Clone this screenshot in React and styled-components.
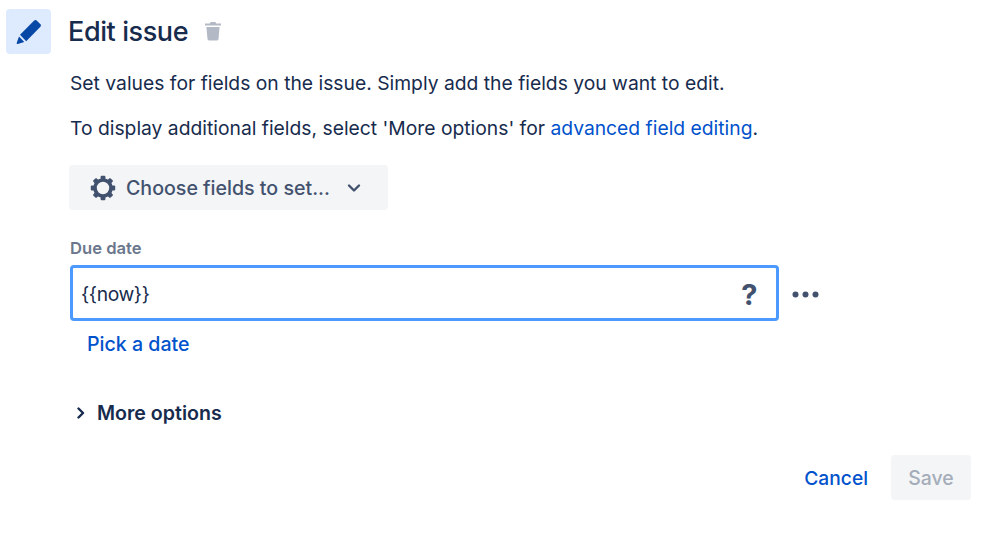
import React from "react";
import styled, { createGlobalStyle } from "styled-components";

const Global = createGlobalStyle`
  html, body { margin: 0; padding: 0; background: #fff; }
  body { font-family: Inter, "Liberation Sans", sans-serif; color: #172b4d; }
`;
const Page = styled.div`
  width: 998px; height: 558px; box-sizing: border-box; padding: 9px 27px 0 6px; overflow: hidden;
  display: flex; flex-direction: column;
`;
const Header = styled.header`
  display: flex; align-items: center; height: 45px;
`;
const IconTile = styled.div`
  width: 45px; height: 45px; border-radius: 4px; background: #deebff;
  display: flex; align-items: center; justify-content: center; margin-right: 17px;
`;
const Title = styled.h1`
  margin: 0; font-size: 27px; font-weight: 500; letter-spacing: -0.4px; color: #172b4d; line-height: 45px;
`;
const Trash = styled.svg`
  width: 18px; height: 20px; margin-left: 16px; margin-top: -2px;
`;
const Body = styled.div`
  padding-left: 64px; display: flex; flex-direction: column;
`;
const Para = styled.p`
  margin: ${p => p.$top}px 0 0; font-size: 19.3px; line-height: 24px; color: #172b4d;
`;
const Link = styled.a`
  color: #0052cc; text-decoration: none;
`;
const FieldButton = styled.button`
  margin: 25px 0 0 -1px; width: 319px; height: 45px; border: 0; border-radius: 4px; background: #f4f5f7;
  display: flex; align-items: center; padding: 0 0 0 21px; box-sizing: border-box;
  font: 500 19.6px Inter, sans-serif; color: #42526e;
`;
const ButtonLabel = styled.span`
  margin-left: 10px;
`;
const Chevron = styled.svg`
  margin-left: 17px; width: 14px; height: 10px;
`;
const Label = styled.label`
  margin-top: 28px; font-size: 16.6px; font-weight: 600; line-height: 20px; color: #6b778c;
`;
const FieldRow = styled.div`
  margin-top: 7px; display: flex; align-items: center;
`;
const Input = styled.div`
  width: 709px; height: 56px; box-sizing: border-box; border: 3px solid #4c9aff; border-radius: 4px;
  display: flex; align-items: center; justify-content: space-between; padding: 2px 19px 0 8px;
  font-size: 19.3px; letter-spacing: -0.4px; color: #172b4d; background: #fff;
`;
const Help = styled.span`
  font-size: 29px; font-weight: 700; color: #42526e; line-height: 1;
`;
const Dots = styled.svg`
  width: 27px; height: 7px; margin: 3px 0 0 13px;
`;
const PickDate = styled(Link)`
  margin: 11px 0 0 17px; font-size: 19.6px; font-weight: 500; line-height: 24px;
`;
const More = styled.div`
  margin-top: 45px; display: flex; align-items: center; font-size: 19.6px; font-weight: 600; line-height: 24px; color: #172b4d;
`;
const MoreIcon = styled.svg`
  width: 10px; height: 12px; margin: 0 11px 0 6px;
`;
const Actions = styled.div`
  margin-top: 30px; display: flex; justify-content: flex-end; align-items: center;
`;
const Cancel = styled(Link)`
  font-size: 19.2px; font-weight: 500; margin-right: 23px;
`;
const Save = styled.button`
  width: 80px; height: 45px; border: 0; border-radius: 4px; background: #f4f5f7; color: #a5adba;
  font: 500 19.4px Inter, sans-serif; padding: 0;
`;

const Gear = () => (
  <svg width="26" height="26" viewBox="0 0 26 26">
    <circle cx="13" cy="13" r="8" fill="none" stroke="#42526e" strokeWidth="3.6" />
    {[0, 45, 90, 135, 180, 225, 270, 315].map(a => (
      <rect key={a} x="10.6" y="0.8" width="4.8" height="4" rx="1" fill="#42526e" transform={`rotate(${a} 13 13)`} />
    ))}
  </svg>
);

export default function App() {
  return (
    <Page>
      <Global />
      <Header>
        <IconTile>
          <svg width="26" height="26" viewBox="0 0 26 26">
            <path fill="#0747a6" d="M18.2 1.6a1.8 1.8 0 0 1 2.5 0l3.7 3.6a1.8 1.8 0 0 1 0 2.5L10.2 22.2 4 15.8z" />
            <path fill="#0747a6" d="M3 17.6l5.3 5.4-6.6 2a.8.8 0 0 1-1-1z" />
          </svg>
        </IconTile>
        <Title>Edit issue</Title>
        <Trash viewBox="0 0 18 20">
          <path fill="#b3bac5" d="M6.5 1h5l.6 1.4H17v2.2H1V2.4h4.9zM2.4 6h13.2l-1.1 12a1.5 1.5 0 0 1-1.5 1.4H5a1.5 1.5 0 0 1-1.5-1.4z" />
        </Trash>
      </Header>
      <Body>
        <Para $top={17}>Set values for fields on the issue. Simply add the fields you want to edit.</Para>
        <Para $top={21}>To display additional fields, select 'More options' for <Link>advanced field editing</Link>.</Para>
        <FieldButton>
          <Gear />
          <ButtonLabel>Choose fields to set...</ButtonLabel>
          <Chevron viewBox="0 0 14 10">
            <path d="M2 2.5l5 5 5-5" fill="none" stroke="#42526e" strokeWidth="2.4" strokeLinecap="round" strokeLinejoin="round" />
          </Chevron>
        </FieldButton>
        <Label>Due date</Label>
        <FieldRow>
          <Input>
            <span>{"{{now}}"}</span>
            <Help>?</Help>
          </Input>
          <Dots viewBox="0 0 27 7">
            <circle cx="3.5" cy="3.5" r="3" fill="#42526e" />
            <circle cx="13.5" cy="3.5" r="3" fill="#42526e" />
            <circle cx="23.5" cy="3.5" r="3" fill="#42526e" />
          </Dots>
        </FieldRow>
        <PickDate>Pick a date</PickDate>
        <More>
          <MoreIcon viewBox="0 0 10 12">
            <path d="M2.5 1.5L7 6l-4.5 4.5" fill="none" stroke="#172b4d" strokeWidth="2.4" strokeLinecap="round" strokeLinejoin="round" />
          </MoreIcon>
          More options
        </More>
        <Actions>
          <Cancel>Cancel</Cancel>
          <Save>Save</Save>
        </Actions>
      </Body>
    </Page>
  );
}
